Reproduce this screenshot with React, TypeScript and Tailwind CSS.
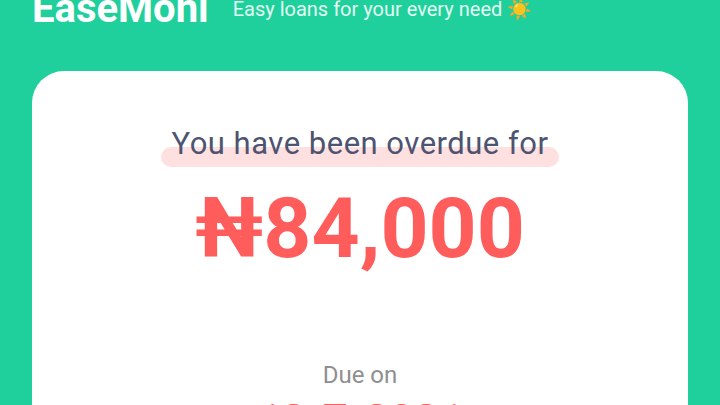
export default function App() {
  return (
    <div className="h-[405px] w-[720px] overflow-hidden bg-[#1fd09c] font-['Roboto',sans-serif]">
      <div className="flex h-[71px] items-start gap-[24px] pl-[32px]">
        <div className="mt-[-15px] text-[40px] leading-[47px] font-bold text-white">EaseMoni</div>
        <div className="mt-[-3px] text-[20px] leading-[24px] text-[#e3fbf3]">Easy loans for your every need ☀️</div>
      </div>
      <div className="mx-[32px] flex h-[400px] flex-col items-center rounded-t-[32px] bg-white">
        <div className="relative mt-[54px] flex h-[37px] w-[398px] justify-center">
          <div className="absolute bottom-[-5px] left-0 h-[20px] w-full rounded-full bg-[#ffe0e0]" />
          <div className="relative text-[31px] leading-[37px] tracking-[0.5px] text-[#4e5370]">You have been overdue for</div>
        </div>
        <div className="mt-[18px] text-[84px] leading-[98px] font-bold text-[#ff5c5c]">₦84,000</div>
        <div className="mt-[83px] text-[24px] leading-[28px] text-[#8f8f8f]">Due on</div>
        <div className="mt-[5px] text-[43px] leading-[50px] font-bold text-[#ff5c5c]">12-7-2021</div>
      </div>
    </div>
  );
}
